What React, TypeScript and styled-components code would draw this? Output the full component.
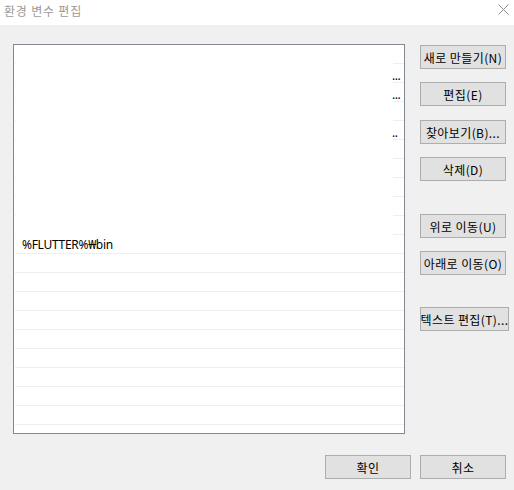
import * as React from "react"
import styled, { createGlobalStyle } from "styled-components"

const GlobalStyle = createGlobalStyle`
  html, body {
    margin: 0;
    padding: 0;
    background: #f0f0f0;
  }
  body {
    font-family: "Noto Sans CJK KR", "Noto Sans", sans-serif;
    font-size: 12px;
    color: #000;
  }
`

const Window = styled.div`
  width: 514px;
  height: 490px;
  display: flex;
  flex-direction: column;
  background: #f0f0f0;
  overflow: hidden;
`

const TitleBar = styled.div`
  height: 25px;
  background: #fff;
  display: flex;
  align-items: center;
  justify-content: space-between;
  padding: 0 4px 4px 4px;
  box-sizing: border-box;
  color: #9a9a9a;
  font-size: 12px;
  letter-spacing: 0.8px;
`

const CloseIcon = styled.svg`
  width: 11px;
  height: 11px;
  margin-right: 1px;
  margin-top: -2px;
`

const Body = styled.div`
  display: flex;
  padding: 19px 0 0 13px;
`

const ListBox = styled.div`
  width: 392px;
  height: 390px;
  box-sizing: border-box;
  border: 1px solid #828790;
  background: #fff;
  overflow: hidden;
  display: flex;
  flex-direction: column;
`

const Row = styled.div<{ $masked?: boolean }>`
  flex: none;
  height: 19px;
  box-sizing: border-box;
  margin-left: 1px;
  position: relative;
  display: flex;
  align-items: center;
  padding-left: 7px;
  font-family: "Noto Sans", "Noto Sans CJK KR", sans-serif;
  font-size: 12px;
  letter-spacing: -0.3px;
  line-height: 18px;
  color: #000;
  background-repeat: no-repeat;
  background-position: left bottom;
  background-size: 100% 1px;
  background-image: ${p =>
    p.$masked
      ? "linear-gradient(to right, #efefef 0, #efefef 1px, transparent 1px, transparent calc(100% - 11px), #efefef calc(100% - 11px))"
      : "linear-gradient(#efefef, #efefef)"};
`

const Dots = styled.span`
  position: absolute;
  left: 377px;
  bottom: 1px;
  font-size: 12px;
  letter-spacing: -0.5px;
  line-height: 12px;
  color: #000;
`

const ButtonColumn = styled.div`
  display: flex;
  flex-direction: column;
  align-items: flex-start;
  padding: 1px 0 0 15px;
`

const Button = styled.button<{ $top?: number; $width?: number }>`
  width: ${p => p.$width ?? 86}px;
  height: 24px;
  margin-top: ${p => p.$top ?? 0}px;
  padding: 0;
  border: 1px solid #adadad;
  background: #e1e1e1;
  font-family: "Noto Sans CJK KR", "Noto Sans", sans-serif;
  font-size: 12px;
  color: #000;
  white-space: nowrap;
  letter-spacing: 0.4px;
  display: flex;
  align-items: center;
  justify-content: center;
  box-sizing: border-box;
`

const Footer = styled.div`
  display: flex;
  justify-content: flex-end;
  gap: 9px;
  padding: 21px 8px 0 0;
`

const rows: { text?: string; dots?: string; masked: boolean }[] = [
  { masked: true },
  { masked: true, dots: "..." },
  { masked: true, dots: "..." },
  { masked: true },
  { masked: true, dots: ".." },
  { masked: true },
  { masked: true },
  { masked: true },
  { masked: true },
  { masked: true },
  { masked: false, text: "%FLUTTER%₩bin" },
  ...Array.from({ length: 10 }, () => ({ masked: false })),
]

export default function App() {
  return (
    <Window>
      <GlobalStyle />
      <TitleBar>
        <span>환경 변수 편집</span>
        <CloseIcon viewBox="0 0 11 11">
          <path d="M0.5 0.5 L10.5 10.5 M10.5 0.5 L0.5 10.5" stroke="#8a8a8a" strokeWidth="1" fill="none" />
        </CloseIcon>
      </TitleBar>
      <Body>
        <ListBox>
          {rows.map((r, i) => (
            <Row key={i} $masked={r.masked}>
              {r.text}
              {r.dots && <Dots>{r.dots}</Dots>}
            </Row>
          ))}
        </ListBox>
        <ButtonColumn>
          <Button>새로 만들기(N)</Button>
          <Button $top={13}>편집(E)</Button>
          <Button $top={14}>찾아보기(B)...</Button>
          <Button $top={13}>삭제(D)</Button>
          <Button $top={33}>위로 이동(U)</Button>
          <Button $top={13}>아래로 이동(O)</Button>
          <Button $top={32} $width={89}>텍스트 편집(T)...</Button>
        </ButtonColumn>
      </Body>
      <Footer>
        <Button>확인</Button>
        <Button>취소</Button>
      </Footer>
    </Window>
  )
}
